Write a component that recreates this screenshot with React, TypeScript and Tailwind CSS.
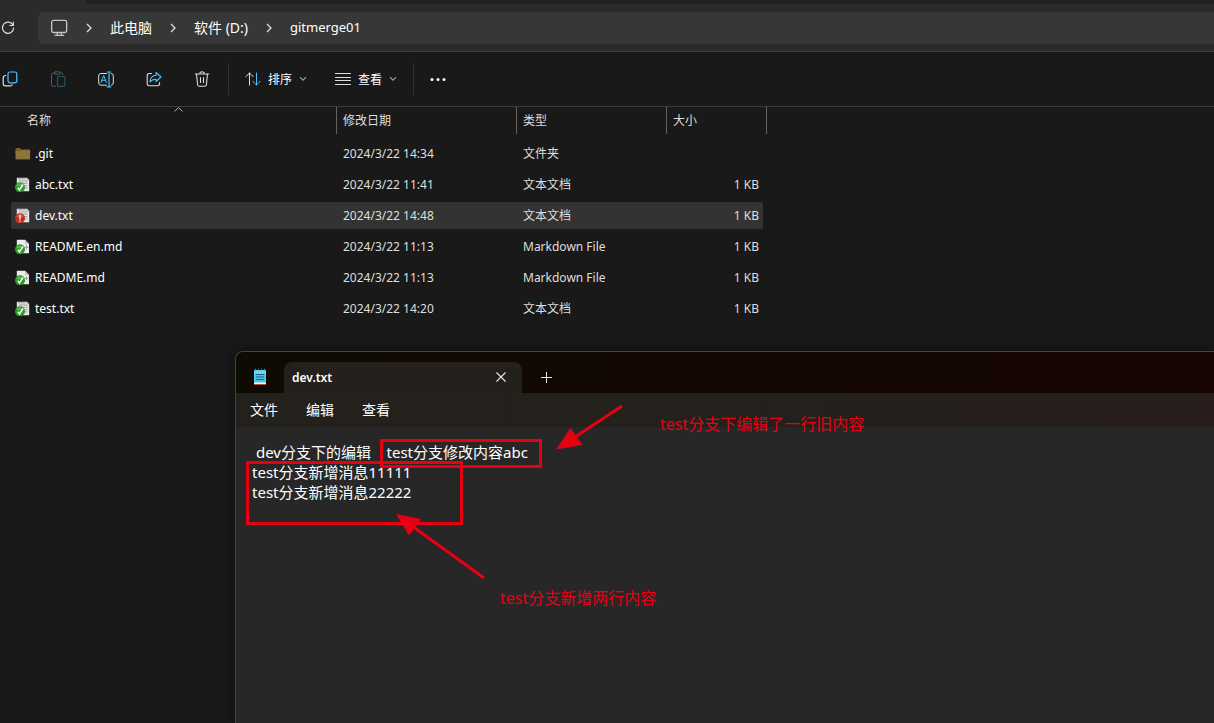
import type { ReactNode } from "react";

type Status = "folder" | "ok" | "changed";

interface FileEntry {
  name: string;
  date: string;
  type: string;
  size: string;
  status: Status;
  lines?: boolean;
  selected?: boolean;
}

const files: FileEntry[] = [
  { name: ".git", date: "2024/3/22 14:34", type: "文件夹", size: "", status: "folder" },
  { name: "abc.txt", date: "2024/3/22 11:41", type: "文本文档", size: "1 KB", status: "ok", lines: true },
  { name: "dev.txt", date: "2024/3/22 14:48", type: "文本文档", size: "1 KB", status: "changed", lines: true, selected: true },
  { name: "README.en.md", date: "2024/3/22 11:13", type: "Markdown File", size: "1 KB", status: "ok" },
  { name: "README.md", date: "2024/3/22 11:13", type: "Markdown File", size: "1 KB", status: "ok" },
  { name: "test.txt", date: "2024/3/22 14:20", type: "文本文档", size: "1 KB", status: "ok", lines: true },
];

const noteText = " dev分支下的编辑    test分支修改内容abc\ntest分支新增消息11111\ntest分支新增消息22222";

function Icon({ children, className = "h-4 w-4" }: { children: ReactNode; className?: string }) {
  return (
    <svg viewBox="0 0 16 16" className={`shrink-0 ${className}`} fill="none" stroke="#dcdcdc" strokeLinecap="round" strokeLinejoin="round" aria-hidden="true">
      {children}
    </svg>
  );
}

function Crumb() {
  return (
    <svg viewBox="0 0 6 10" className="h-[10px] w-[6px] shrink-0" fill="none" stroke="#e0e0e0" strokeWidth="1.3" aria-hidden="true">
      <path d="M1 1l4 4-4 4" />
    </svg>
  );
}

function ChevronDown() {
  return (
    <svg viewBox="0 0 8 6" className="h-[6px] w-2 shrink-0" fill="none" stroke="#a5a5a5" strokeWidth="1.1" aria-hidden="true">
      <path d="M1 1.2l3 3 3-3" />
    </svg>
  );
}

function FileIcon({ status, lines }: { status: Status; lines?: boolean }) {
  if (status === "folder") {
    return (
      <svg viewBox="0 0 16 16" className="h-4 w-4 shrink-0" aria-hidden="true">
        <path d="M.5 2.800q0-.8.8-.8H5l1.400 1.400h8.100q.6 0 .6.600V7H.5z" fill="#7f5f1c" />
        <path d="M.5 5H5.500L6.800 4.100H14.500q.6 0 .6.600v8q0 .6-.6.6H1.100q-.6 0-.6-.6z" fill="#8a7440" />
        <path d="M.8 12.900h14" stroke="#8c6a20" strokeWidth=".7" />
      </svg>
    );
  }
  return (
    <svg viewBox="0 0 16 16" className="h-4 w-4 shrink-0" aria-hidden="true">
      {lines ? (
        <>
          <path d="M1.800.8h10.200l2.200 2.200v11.300H1.800z" fill="#e6e6e6" />
          <path d="M3 1.800h7.500M4 4h8.500M5 6.300h7.500M8 8.600h4.500M9.500 10.900h3" stroke="#8e8e8e" strokeWidth=".8" />
          <path d="M11.700.8l2.500 2.500h-2.500z" fill="#b0b0b0" />
        </>
      ) : (
        <>
          <path d="M1.800.8h8.200l4 4v9.500H1.800z" fill="#ececec" />
          <path d="M10 .8v4h4z" fill="#bcbcbc" />
          <path d="M11.500 6.300v4M9.500 8.300h4" stroke="#8a8f99" strokeWidth=".8" />
        </>
      )}
      {status === "ok" ? (
        <>
          <circle cx="5" cy="10.300" r="5" fill="#2c9a22" />
          <path d="M1.200 8.500a4.400 4.400 0 0 1 7.600 0q-3.800 2.200-7.600 0" fill="#7fcc70" opacity=".55" />
          <path d="M2.800 10.700l1.700 2.200L8 7.500" fill="none" stroke="#fff" strokeWidth="1.500" />
        </>
      ) : (
        <>
          <circle cx="5" cy="10.300" r="5" fill="#c02f20" />
          <path d="M1.200 8.500a4.400 4.400 0 0 1 7.600 0q-3.800 2.200-7.600 0" fill="#ec7a63" opacity=".55" />
          <path d="M5 6.800v4.700M5 12.400v1.400" stroke="#ffe3dc" strokeWidth="1.500" />
        </>
      )}
    </svg>
  );
}

function Explorer() {
  return (
    <main className="min-h-screen bg-[#191919]">
      <div className="flex h-1 bg-[#2b2b2b]">
        <div className="w-[85px]" />
        <div className="flex-1 rounded-bl bg-[#202020]" />
      </div>
      <nav className="flex h-12 items-center border-b border-[#3c3c3c] bg-[#2b2b2b]" aria-label="地址">
        <button type="button" aria-label="刷新" className="w-[38px]">
          <Icon>
            <path d="M13 5.200A5.600 5.600 0 1 0 13.600 8" strokeWidth="1.200" />
            <path d="M13.300 2v3.500H9.800" strokeWidth="1.200" />
          </Icon>
        </button>
        <div className="flex h-8 flex-1 items-center rounded-l-md bg-[#373737] pl-3 text-sm text-white">
          <Icon className="mr-[18px] h-[18px] w-[18px]">
            <rect x="1.500" y="1.200" width="13.300" height="10.800" rx="1.600" strokeWidth="1.200" stroke="#c4c4c4" />
            <path d="M6.500 12.300v2.200M10 12.300v2.200M4.500 14.500h7.500" strokeWidth="1.200" stroke="#c4c4c4" />
          </Icon>
          <Crumb />
          <a href="#pc" className="mx-[18px]">此电脑</a>
          <Crumb />
          <a href="#d" className="mx-[18px] whitespace-nowrap">软件 (D:)</a>
          <Crumb />
          <a href="#repo" className="ml-[18px] text-[13px]">gitmerge01</a>
        </div>
      </nav>
      <div className="flex h-[55px] items-center border-b border-[#3c3c3c] text-xs text-white" role="toolbar">
        <div className="flex items-center gap-8 pl-[2px]">
          <button type="button" aria-label="复制">
            <Icon>
              <rect x="6" y="1" width="8.800" height="10.800" rx="2" stroke="#4cc2ff" strokeWidth="1.200" />
              <path d="M3.700 4.500Q1.200 4.500 1.200 7v5.500q0 2.300 2.300 2.300H8q2 0 2.200-1" strokeWidth="1.200" />
            </Icon>
          </button>
          <button type="button" aria-label="粘贴" disabled>
            <Icon>
              <path d="M4.500 2.200H3q-1.500 0-1.500 1.500v10.100q0 1.500 1.500 1.500h2.500M10 2.200h1.500q1.500 0 1.500 1.500" stroke="#5c5c5c" />
              <rect x="4.500" y=".8" width="5.500" height="2.400" rx="1.200" stroke="#5c5c5c" />
              <rect x="7.500" y="5.500" width="7.300" height="9.800" rx="1.300" stroke="#28506a" strokeWidth="1.200" />
            </Icon>
          </button>
          <button type="button" aria-label="重命名">
            <Icon className="h-[17px] w-4">
              <path d="M8.500 2H3Q.7 2 .7 4.200v7.300q0 2.200 2.300 2.200h5.500M13.300 2q2 .1 2 2.200v7.300q0 2.100-2 2.200" />
              <path d="M11 .5v14.800M9.200.5h3.600M9.200 15.300h3.600" stroke="#4cc2ff" strokeWidth="1.200" />
              <path d="M3 11l2.700-7 2.700 7M3.900 8.800h3.600" stroke="#4cc2ff" />
            </Icon>
          </button>
          <button type="button" aria-label="共享">
            <Icon>
              <path d="M5.500 2.500H3.300Q1.200 2.500 1.200 4.600v8q0 2.100 2.100 2.100h8.200q2.100 0 2.100-2.100v-1" strokeWidth="1.100" />
              <path d="M10 1.500l5 4.500-5 4.500V8.200Q6.200 8 4 11q0-6 6-6.800z" stroke="#4cc2ff" strokeWidth="1.100" />
            </Icon>
          </button>
          <button type="button" aria-label="删除">
            <Icon>
              <path d="M1.200 3h13.600M5.800 3q0-2.300 2.200-2.300T10.200 3M2.500 3l1.100 10.700q.2 1.600 1.700 1.600h5.400q1.500 0 1.700-1.600L13.500 3M6.500 6.500v5M9.500 6.500v5" strokeWidth="1.100" />
            </Icon>
          </button>
        </div>
        <div className="ml-[18px] h-8 w-px bg-[#303030]" />
        <button type="button" className="ml-4 flex items-center gap-[7px]">
          <Icon>
            <path d="M4.500 14V2M.8 5.700L4.500 2l3.700 3.700" />
            <path d="M11.500 2v12M7.800 10.300l3.700 3.700 3.700-3.700" stroke="#4cc2ff" />
          </Icon>
          <span className="pt-px">排序</span>
          <ChevronDown />
        </button>
        <button type="button" className="ml-7 flex items-center gap-[7px]">
          <Icon>
            <path d="M.5 2.500h15M.5 6.500h15M.5 9.500h15M.5 13.500h15" />
          </Icon>
          <span className="pt-px">查看</span>
          <ChevronDown />
        </button>
        <div className="ml-4 h-8 w-px bg-[#303030]" />
        <button type="button" aria-label="更多" className="ml-4">
          <Icon>
            <g fill="#fff" stroke="none">
              <circle cx="2" cy="8.500" r="1.500" />
              <circle cx="8" cy="8.500" r="1.500" />
              <circle cx="14" cy="8.500" r="1.500" />
            </g>
          </Icon>
        </button>
      </div>
      <table className="ml-[11px] w-[756px] table-fixed border-collapse text-left text-xs text-[#dedede]">
        <colgroup>
          <col className="w-[326px]" />
          <col className="w-[180px]" />
          <col className="w-[150px]" />
          <col className="w-[100px]" />
        </colgroup>
        <thead>
          <tr className="h-[31px] align-top">
            <th className="p-0 font-normal" aria-sort="ascending">
              <div className="relative flex h-[27px] items-center border-r border-[#636363] pl-4">
                名称
                <svg viewBox="0 0 9 5" className="absolute top-0 left-1/2 h-[5px] w-[9px]" fill="none" stroke="#b0b0b0" aria-hidden="true">
                  <path d="M.5 4.500l4-4 4 4" />
                </svg>
              </div>
            </th>
            {["修改日期", "类型", "大小"].map((label) => (
              <th key={label} className="p-0 font-normal">
                <div className="flex h-[27px] items-center border-r border-[#636363] pl-[6px]">{label}</div>
              </th>
            ))}
          </tr>
        </thead>
        <tbody>
          {files.map((f) => {
            const bg = f.selected ? "bg-[#333333]" : "";
            return (
              <tr key={f.name} className="h-[31px]">
                <td className="p-0">
                  <div className={`flex h-[27px] items-center gap-1 rounded-l-xs pl-1 text-white ${bg}`}>
                    <FileIcon status={f.status} lines={f.lines} />
                    {f.name}
                  </div>
                </td>
                <td className="p-0">
                  <div className={`flex h-[27px] items-center pl-[6px] ${bg}`}>{f.date}</div>
                </td>
                <td className="p-0">
                  <div className={`flex h-[27px] items-center pl-[6px] ${bg}`}>{f.type}</div>
                </td>
                <td className="p-0">
                  <div className={`mr-1 flex h-[27px] items-center justify-end rounded-r-xs pr-1 ${bg}`}>{f.size}</div>
                </td>
              </tr>
            );
          })}
        </tbody>
      </table>
    </main>
  );
}

function Notepad() {
  return (
    <section className="absolute top-[351px] right-0 bottom-0 left-[235px] flex flex-col overflow-hidden rounded-tl-lg border-t border-l border-[#444444] bg-[#272727] text-white shadow-[0_0_16px_rgba(0,0,0,0.5)]">
      <div className="flex h-[41px] shrink-0 items-end bg-linear-to-r from-[#0e0b02] via-[#130702] to-[#160502]">
        <svg viewBox="0 0 14 17" className="mb-2 ml-[17px] h-[17px] w-[14px]" aria-hidden="true">
          <path d="M1 2h12v13H1z" fill="#50c4e6" />
          <path d="M1 2h12v4H1z" fill="#6fd3ee" />
          <path d="M1 14.500h12V16H1z" fill="#f3f3f3" />
          <path d="M1 16h12v1H1z" fill="#b5571c" />
          <path d="M2.500.5v2M5.500.5v2M8.500.5v2M11.500.5v2" stroke="#1d6f96" />
          <path d="M3 6.500h8M3 9h8M3 11.500h8" stroke="#0f6187" strokeWidth="1.200" />
        </svg>
        <div className="ml-[17px] flex h-[31px] w-[238px] items-center justify-between rounded-t-lg bg-[#24201b] pr-4 pl-2 text-xs font-semibold">
          <span>dev.txt</span>
          <button type="button" aria-label="关闭" className="pb-px">
            <svg viewBox="0 0 10 10" className="h-[10px] w-[10px]" stroke="#e6e6e6" strokeWidth="1.100" aria-hidden="true">
              <path d="M.5.5l9 9M9.500.5l-9 9" />
            </svg>
          </button>
        </div>
        <button type="button" aria-label="新建标签页" className="mb-[10px] ml-[19px]">
          <svg viewBox="0 0 11 11" className="h-[11px] w-[11px]" stroke="#e6e6e6" aria-hidden="true">
            <path d="M5.500 0v11M0 5.500h11" />
          </svg>
        </button>
      </div>
      <div className="flex h-[34px] shrink-0 items-center gap-7 border-b border-[#221f1c] bg-linear-to-r from-[#24201b] from-60% to-[#281d1b] pl-[14px] text-sm">
        <button type="button">文件</button>
        <button type="button">编辑</button>
        <button type="button">查看</button>
      </div>
      <textarea
        aria-label="dev.txt"
        defaultValue={noteText}
        spellCheck={false}
        className="w-full flex-1 resize-none overflow-hidden bg-transparent px-4 py-[15px] text-[15px] leading-5 text-white outline-none"
      />
    </section>
  );
}

function Annotations() {
  return (
    <div className="pointer-events-none absolute inset-0 text-base text-[#e60012]">
      <div className="absolute top-[439px] left-[380px] h-[29px] w-[162px] border-3 border-[#e60012]" />
      <div className="absolute top-[461px] left-[246px] h-[64px] w-[217px] border-3 border-[#e60012]" />
      <svg className="absolute top-[400px] left-[390px] h-[184px] w-[240px]" viewBox="390 400 240 184" fill="#e60012" stroke="#e60012" aria-hidden="true">
        <path d="M622 406L572 439M484 578L412 526" strokeWidth="3" />
        <path d="M556 449.500l14.500-21.500 12 17zM396 514l25.500 5-12.500 16.500z" stroke="none" />
      </svg>
      <p className="absolute top-[412px] left-[660px] whitespace-nowrap">test分支下编辑了一行旧内容</p>
      <p className="absolute top-[586px] left-[500px] whitespace-nowrap">test分支新增两行内容</p>
    </div>
  );
}

export default function App() {
  return (
    <div className="relative min-h-screen overflow-hidden bg-[#191919] font-['Noto_Sans','Noto_Sans_CJK_SC',sans-serif]">
      <Explorer />
      <Notepad />
      <Annotations />
    </div>
  );
}
